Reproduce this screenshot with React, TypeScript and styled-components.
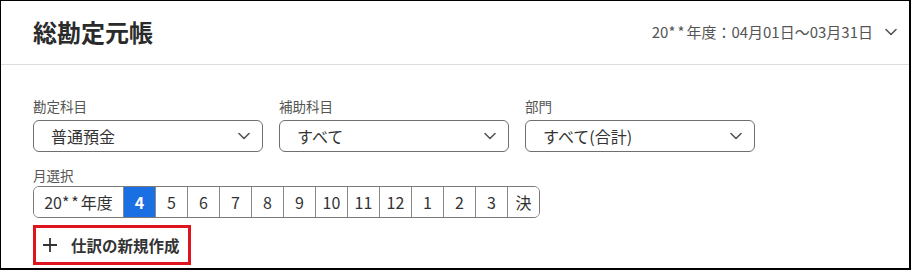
import React from 'react';
import styled, { createGlobalStyle } from 'styled-components';

const GlobalStyle = createGlobalStyle`
  body {
    margin: 0;
    background: #fff;
    font-family: "Noto Sans CJK JP", "Noto Sans", sans-serif;
  }
`;

const Frame = styled.div`
  width: 911px;
  height: 270px;
  box-sizing: border-box;
  border-style: solid;
  border-color: #000;
  border-width: 1px 2px 2px 1px;
  overflow: hidden;
`;

const Header = styled.header`
  height: 63px;
  display: flex;
  align-items: center;
  justify-content: space-between;
  padding: 0 12px 0 32px;
  border-bottom: 1px solid #ddd;
`;

const Title = styled.h1`
  margin: -2px 0 0;
  font-size: 24px;
  font-weight: 700;
  color: #2b2b2b;
`;

const Period = styled.button`
  display: flex;
  align-items: center;
  gap: 12px;
  border: none;
  background: none;
  padding: 0;
  font-family: inherit;
  font-size: 15px;
  color: #555;
  margin-top: -2px;
`;

const Stars = styled.span`
  letter-spacing: 2px;
`;

const Body = styled.div`
  padding: 32px 0 0 32px;
`;

const FilterRow = styled.div`
  display: flex;
  gap: 16px;
`;

const Field = styled.div`
  display: flex;
  flex-direction: column;
`;

const Label = styled.label`
  font-size: 13.5px;
  line-height: 18px;
  color: #555;
  margin-bottom: 5px;
`;

const Select = styled.div`
  width: 230px;
  height: 32px;
  box-sizing: border-box;
  border: 1px solid #6f6f6f;
  border-radius: 6px;
  display: flex;
  align-items: center;
  justify-content: space-between;
  padding: 0 12px 0 17px;
  font-size: 16px;
  color: #333;
`;

const MonthField = styled(Field)`
  margin-top: 14px;
`;

const MonthLabel = styled(Label)`
  margin-bottom: 2px;
`;

const MonthBar = styled.div`
  display: flex;
  height: 32px;
  width: max-content;
  border: 1px solid #7a7a7a;
  border-radius: 6px;
  box-sizing: border-box;
  overflow: hidden;
`;

const MonthCell = styled.div<{ $active?: boolean; $wide?: boolean }>`
  width: ${p => (p.$wide ? '89px' : '31px')};
  display: flex;
  align-items: center;
  justify-content: center;
  font-size: 16px;
  color: ${p => (p.$active ? '#fff' : '#333')};
  background: ${p => (p.$active ? '#1a6fe3' : '#fff')};
  font-weight: ${p => (p.$active ? 700 : 400)};
  & + & {
    border-left: 1px solid #8a8a8a;
  }
`;

const NewButton = styled.button`
  margin-top: 7px;
  width: 158px;
  height: 40px;
  box-sizing: border-box;
  border: 3px solid #e0141e;
  background: #fff;
  display: flex;
  align-items: center;
  gap: 13px;
  padding: 0 0 0 6px;
  font-family: inherit;
  font-size: 15.5px;
  font-weight: 700;
  color: #333;
`;

const Chevron = ({ color = '#555' }: { color?: string }) => (
  <svg width="12" height="8" viewBox="0 0 12 8" fill="none">
    <path d="M1 1.5 L6 6.5 L11 1.5" stroke={color} strokeWidth="1.6" strokeLinecap="round" strokeLinejoin="round" />
  </svg>
);

const PlusIcon = () => (
  <svg width="16" height="16" viewBox="0 0 16 16">
    <path d="M8 1 V15 M1 8 H15" stroke="#333" strokeWidth="1.8" />
  </svg>
);

const filters = [
  { label: '勘定科目', value: '普通預金' },
  { label: '補助科目', value: 'すべて' },
  { label: '部門', value: 'すべて(合計)' },
];

const months = ['4', '5', '6', '7', '8', '9', '10', '11', '12', '1', '2', '3', '決'];

export default function App() {
  return (
    <>
      <GlobalStyle />
      <Frame>
        <Header>
          <Title>総勘定元帳</Title>
          <Period>
            <span>20<Stars>**</Stars>年度：04月01日〜03月31日</span>
            <Chevron />
          </Period>
        </Header>
        <Body>
          <FilterRow>
            {filters.map(f => (
              <Field key={f.label}>
                <Label>{f.label}</Label>
                <Select>
                  <span>{f.value}</span>
                  <Chevron />
                </Select>
              </Field>
            ))}
          </FilterRow>
          <MonthField>
            <MonthLabel>月選択</MonthLabel>
            <MonthBar>
              <MonthCell $wide>20<Stars>**</Stars>年度</MonthCell>
              {months.map(m => (
                <MonthCell key={m} $active={m === '4'}>{m}</MonthCell>
              ))}
            </MonthBar>
          </MonthField>
          <NewButton>
            <PlusIcon />
            仕訳の新規作成
          </NewButton>
        </Body>
      </Frame>
    </>
  );
}
